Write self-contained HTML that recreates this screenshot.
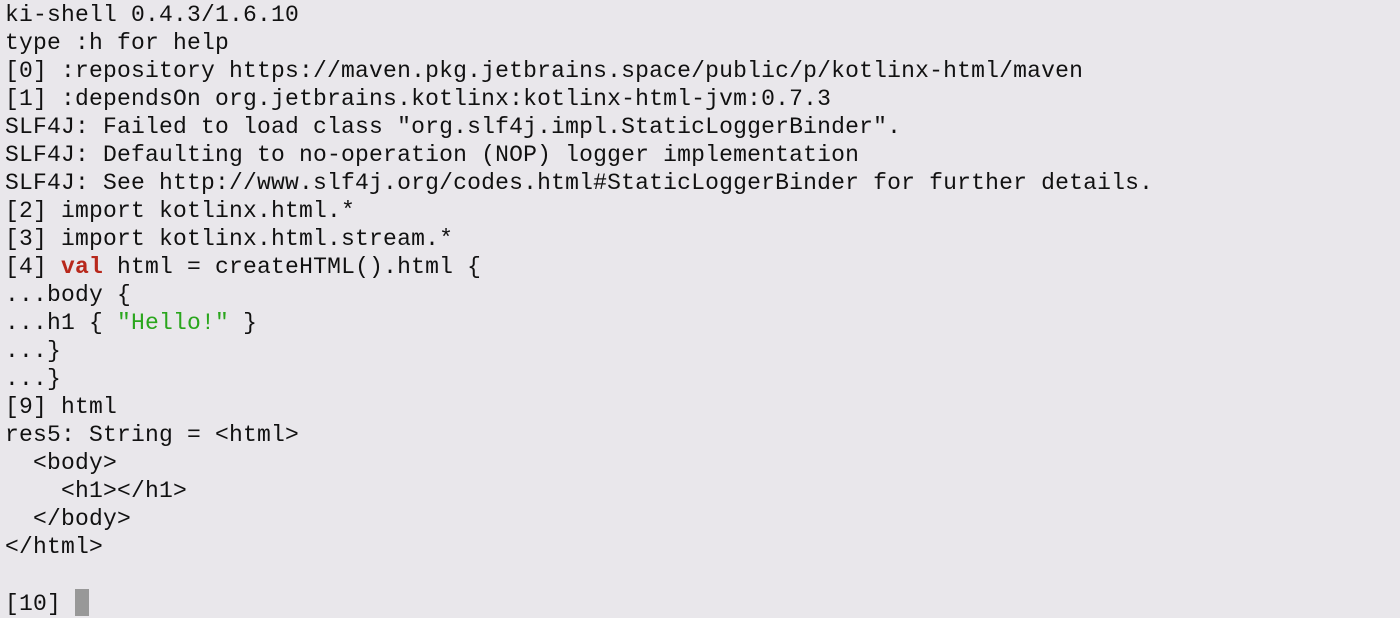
<!DOCTYPE html>
<html><head><meta charset="utf-8"><style>
html,body{margin:0;padding:0;background:#e9e7eb;width:1400px;height:618px;overflow:hidden}
pre{margin:0;padding:1px 0 0 5px;font-family:"Liberation Mono",monospace;font-size:23px;line-height:28px;color:#111;letter-spacing:0.2px}
.k{color:#b8281c;font-weight:bold}
.s{color:#2aa61d}
.c{display:inline-block;width:14px;height:27px;background:#989898;vertical-align:-6px}
</style></head><body><pre>ki-shell 0.4.3/1.6.10
type :h for help
[0] :repository https://maven.pkg.jetbrains.space/public/p/kotlinx-html/maven
[1] :dependsOn org.jetbrains.kotlinx:kotlinx-html-jvm:0.7.3
SLF4J: Failed to load class "org.slf4j.impl.StaticLoggerBinder".
SLF4J: Defaulting to no-operation (NOP) logger implementation
SLF4J: See http://www.slf4j.org/codes.html#StaticLoggerBinder for further details.
[2] import kotlinx.html.*
[3] import kotlinx.html.stream.*
[4] <span class="k">val</span> html = createHTML().html {
...body {
...h1 { <span class="s">"Hello!"</span> }
...}
...}
[9] html
res5: String = &lt;html&gt;
  &lt;body&gt;
    &lt;h1&gt;&lt;/h1&gt;
  &lt;/body&gt;
&lt;/html&gt;

[10] <span class="c"></span></pre></body></html>
